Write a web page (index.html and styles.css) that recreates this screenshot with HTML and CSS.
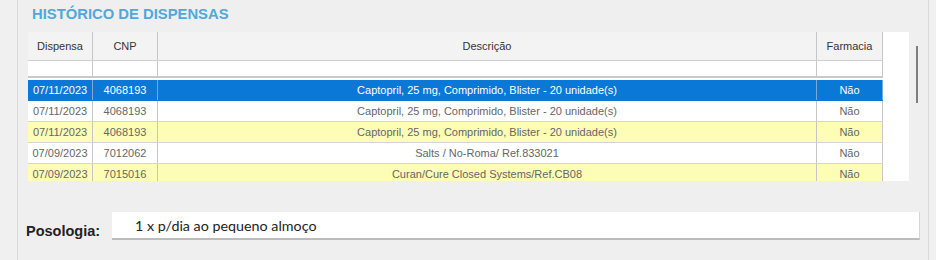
FILE: index.html
```html
<!DOCTYPE html>
<html lang="pt">
<head>
<meta charset="utf-8">
<title>Histórico de Dispensas</title>
<link rel="stylesheet" href="styles.css">
</head>
<body>
<div class="window">
  <h2 class="title">HISTÓRICO DE DISPENSAS</h2>
  <div class="grid-wrap">
    <div class="grid">
      <div class="row hdr">
        <div class="c c1">Dispensa</div>
        <div class="c c2">CNP</div>
        <div class="c c3">Descrição</div>
        <div class="c c4">Farmacia</div>
      </div>
      <div class="row filter">
        <div class="c c1"></div>
        <div class="c c2"></div>
        <div class="c c3"></div>
        <div class="c c4"></div>
      </div>
      <div class="row sel">
        <div class="c c1">07/11/2023</div>
        <div class="c c2">4068193</div>
        <div class="c c3">Captopril, 25 mg, Comprimido, Blister - 20 unidade(s)</div>
        <div class="c c4">Não</div>
      </div>
      <div class="row">
        <div class="c c1">07/11/2023</div>
        <div class="c c2">4068193</div>
        <div class="c c3">Captopril, 25 mg, Comprimido, Blister - 20 unidade(s)</div>
        <div class="c c4">Não</div>
      </div>
      <div class="row alt">
        <div class="c c1">07/11/2023</div>
        <div class="c c2">4068193</div>
        <div class="c c3">Captopril, 25 mg, Comprimido, Blister - 20 unidade(s)</div>
        <div class="c c4">Não</div>
      </div>
      <div class="row">
        <div class="c c1">07/09/2023</div>
        <div class="c c2">7012062</div>
        <div class="c c3">Salts / No-Roma/ Ref.833021</div>
        <div class="c c4">Não</div>
      </div>
      <div class="row alt">
        <div class="c c1">07/09/2023</div>
        <div class="c c2">7015016</div>
        <div class="c c3">Curan/Cure Closed Systems/Ref.CB08</div>
        <div class="c c4">Não</div>
      </div>
    </div>
    <div class="scroll"><div class="thumb"></div></div>
  </div>
  <div class="poso">
    <label class="poso-label">Posologia:</label>
    <div class="poso-input">1 x p/dia ao pequeno almoço</div>
  </div>
</div>
</body>
</html>
```
FILE: styles.css
```css
html, body {
  margin: 0;
  padding: 0;
  background: #f0f0f0;
  width: 936px;
  height: 260px;
  overflow: hidden;
  font-family: "Liberation Sans", Arial, sans-serif;
}
.window {
  margin-left: 17px;
  width: 910px;
  height: 260px;
  border-left: 1px solid #dadada;
  border-right: 1px solid #dadada;
  background: #efefef;
}
.title {
  margin: 0;
  height: 32px;
  padding: 6px 0 0 14px;
  box-sizing: border-box;
  font-size: 14.8px;
  line-height: 16px;
  font-weight: bold;
  color: #4ea9da;
}
.grid-wrap {
  display: flex;
  margin-left: 10px;
}
.grid {
  width: 881px;
  height: 149px;
  overflow: hidden;
  background: #fff;
}
.row {
  display: grid;
  grid-template-columns: 65px 65px 659px 66px;
  width: 855px;
  height: 20px;
  border-bottom: 1px solid #d4d4d4;
  font-size: 11px;
  color: #666;
}
.c {
  border-right: 1px solid #c6c6c6;
  text-align: center;
  line-height: 20px;
  white-space: nowrap;
  overflow: hidden;
}
.hdr {
  height: 28px;
  background: #f3f3f3;
  color: #333;
  border-bottom: 1px solid #cfcfcf;
}
.hdr .c { line-height: 28px; }
.filter {
  height: 15px;
  border-bottom: 2px solid #c9c9c9;
  margin-bottom: 2px;
}
.sel {
  background: #0a78d6;
  color: #fff;
  border-bottom-color: #0a78d6;
}
.sel .c { border-right-color: #7aa9d6; }
.alt { background: #fefdb5; }
.scroll {
  width: 18px;
}
.thumb {
  margin: 14px 0 0 7px;
  width: 2px;
  height: 57px;
  background: #7f7f7f;
}
.poso {
  display: flex;
  align-items: flex-end;
  margin-top: 31px;
  padding-left: 8px;
}
.poso-label {
  width: 86px;
  font-size: 14.5px;
  font-weight: bold;
  color: #222;
  line-height: 16px;
  padding-bottom: 1px;
}
.poso-input {
  width: 808px;
  height: 28px;
  box-sizing: border-box;
  background: #fff;
  border-bottom: 2px solid #bcbcbc;
  border-right: 1px solid #d6d6d6;
  padding-left: 23px;
  line-height: 27px;
  font-family: Lato, "Open Sans", sans-serif;
  font-size: 14.3px;
  color: #222;
}
```
